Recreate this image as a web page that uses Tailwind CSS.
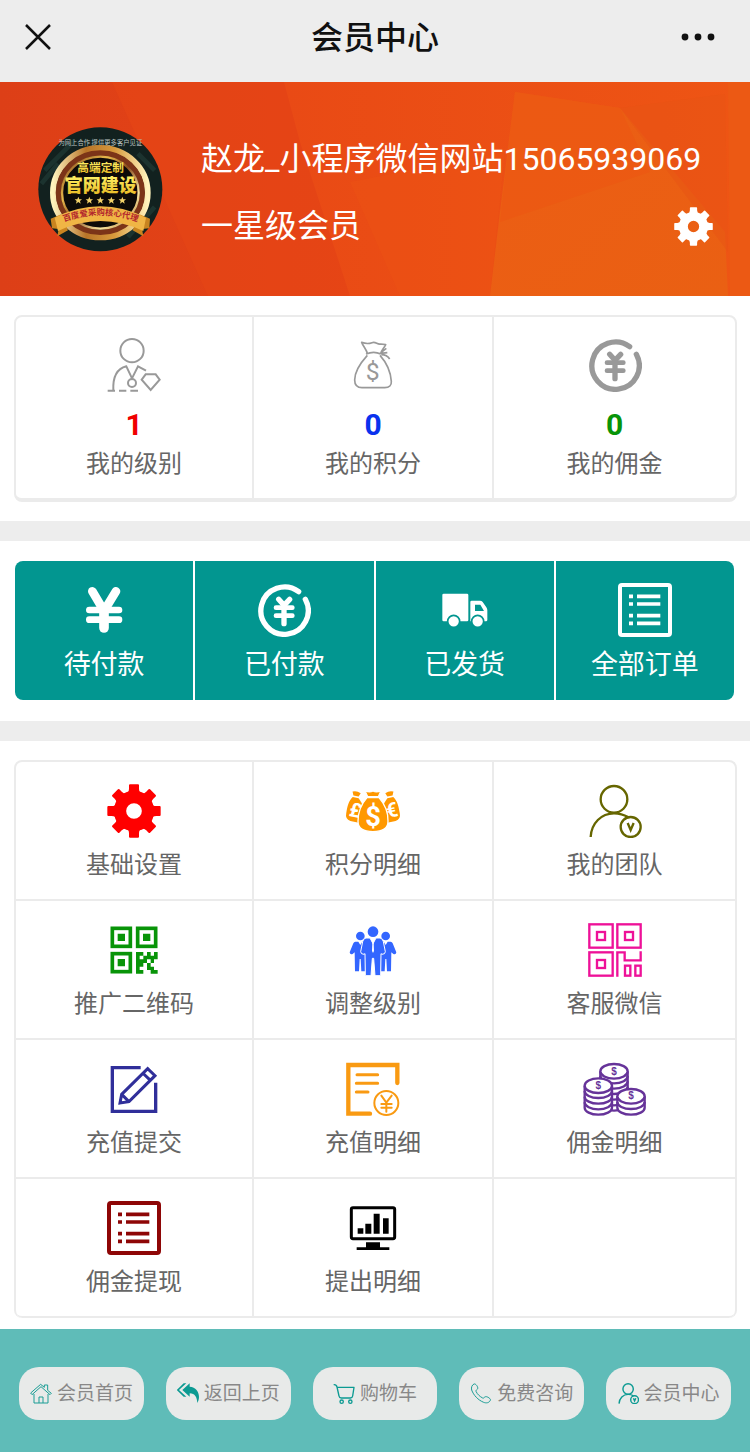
<!DOCTYPE html>
<html lang="zh-CN">
<head>
<meta charset="utf-8">
<meta name="viewport" content="width=device-width, initial-scale=1">
<title>会员中心</title>
<script src="https://cdn.jsdelivr.net/npm/@tailwindcss/browser@4"></script>
</head>
<body class="bg-white font-[Roboto,'Noto_Sans_CJK_SC',sans-serif] text-[#666]">

<!-- Shared icon shapes -->
<svg class="hidden" aria-hidden="true">
  <symbol id="gear" viewBox="0 0 162 162">
    <circle cx="81" cy="81" r="42" fill="none" stroke="currentColor" stroke-width="37"/>
    <g fill="currentColor">
      <path id="tooth" d="M56 30Q66 26 66 14V4Q66 1 69 1H93Q96 1 96 4V14Q96 26 106 30L100 45H62Z"/>
      <use href="#tooth" transform="rotate(45 81 81)"/><use href="#tooth" transform="rotate(90 81 81)"/>
      <use href="#tooth" transform="rotate(135 81 81)"/><use href="#tooth" transform="rotate(180 81 81)"/>
      <use href="#tooth" transform="rotate(225 81 81)"/><use href="#tooth" transform="rotate(270 81 81)"/>
      <use href="#tooth" transform="rotate(315 81 81)"/>
    </g>
  </symbol>
  <symbol id="yen-circle" viewBox="0 0 162 162">
    <g fill="none" stroke="currentColor" stroke-linecap="round" stroke-linejoin="round">
      <path stroke-width="16" d="M125 26A71 71 0 1 0 145 49"/>
      <path stroke-width="16" d="M65 49L81 67L98 49M81 67V122"/>
      <path stroke-width="14" d="M57 74H106M57 98H106"/>
    </g>
  </symbol>
  <symbol id="list" viewBox="0 0 162 162">
    <rect x="6" y="6" width="150" height="150" rx="6" fill="none" stroke="currentColor" stroke-width="12"/>
    <path stroke="currentColor" stroke-width="11" d="M33 40H45M57 40H127M33 63H45M57 63H127M33 98H45M57 98H127M33 121H45M57 121H127"/>
  </symbol>
  <symbol id="member" viewBox="0 0 162 162">
    <g fill="none" stroke="currentColor">
      <circle cx="78" cy="46" r="40"/>
      <path d="M8 159C10 118 40 88 78 88C96 88 108 92 120 99"/>
      <circle cx="128" cy="129" r="30"/>
      <path d="M119 117L128 138L137 117"/>
    </g>
  </symbol>
</svg>

<header class="flex h-[82px] items-start justify-between bg-[#ededed] px-6 text-[#111]">
  <button type="button" aria-label="关闭" class="mt-[23px] w-12">
    <svg class="h-7 w-7" viewBox="0 0 28 28" fill="none" stroke="currentColor" stroke-width="2.5"><path d="M2 2L26 26M26 2L2 26"/></svg>
  </button>
  <h1 class="mt-[14px] text-[32px] leading-[48px] font-medium">会员中心</h1>
  <button type="button" aria-label="更多" class="mt-[30px] flex w-12 justify-end pr-[10px]">
    <svg class="h-[14px] w-9" viewBox="0 0 36 14" fill="currentColor"><circle cx="5" cy="7" r="3.4"/><circle cx="18" cy="7" r="3.4"/><circle cx="31" cy="7" r="3.4"/></svg>
  </button>
</header>

<section class="relative flex h-[214px] items-start bg-[#e24216] pl-[38px] text-white">
  <!-- Faceted backdrop behind the profile -->
  <svg class="absolute inset-0 h-full w-full" viewBox="0 0 750 214" preserveAspectRatio="none" aria-hidden="true">
    <defs>
      <linearGradient id="b1" x1="0" x2="1" y1="0" y2="0"><stop offset="0" stop-color="#dd3f17"/><stop offset="1" stop-color="#e54416"/></linearGradient>
      <linearGradient id="b2" x1="0" x2="1" y1="0" y2="0"><stop offset="0" stop-color="#e94a15"/><stop offset="1" stop-color="#ee5514"/></linearGradient>
      <linearGradient id="b3" x1="0" x2="1" y1="0" y2="1"><stop offset="0" stop-color="#ec5d14"/><stop offset="1" stop-color="#ea6013"/></linearGradient>
    </defs>
    <path fill="url(#b1)" d="M0 0H360V214H0Z"/>
    <path fill="#e64616" opacity=".6" d="M112 0H300L355 214H208Z"/>
    <path fill="url(#b2)" d="M284 0H750V214H350L300 60Z"/>
    <path fill="#ee5815" opacity=".25" d="M350 100L505 70L490 214H400Z"/>
    <path fill="url(#b3)" d="M515 10L620 26L725 150L728 214H490L500 130Z"/>
    <path fill="#ec5713" opacity=".6" d="M515 10L620 26L650 90L500 140Z"/>
    <path fill="#e85313" opacity=".5" d="M620 26L725 12L728 170Z"/>
    <path fill="#ec5914" d="M728 0H750V214H730Z"/>
  </svg>

  <svg class="relative mt-[45px] h-[125px] w-[125px] shrink-0" viewBox="0 0 375 375" role="img" aria-label="头像">
    <defs>
      <linearGradient id="gold" x1="0" x2="1" y1="0" y2="1"><stop offset="0" stop-color="#7a3c14"/><stop offset=".3" stop-color="#e9b94c"/><stop offset=".5" stop-color="#8a4a1c"/><stop offset=".75" stop-color="#fbe6a0"/><stop offset="1" stop-color="#a8661f"/></linearGradient>
      <linearGradient id="gold2" x1="0" x2="1" y1="0" y2="0"><stop offset="0" stop-color="#fff3bd"/><stop offset=".35" stop-color="#b87428"/><stop offset=".65" stop-color="#d89a3c"/><stop offset="1" stop-color="#fff3bd"/></linearGradient>
      <linearGradient id="gold3" x1="0" x2="0" y1="0" y2="1"><stop offset="0" stop-color="#fff46a"/><stop offset="1" stop-color="#e8b820"/></linearGradient>
      <path id="arc" d="M62 291Q188 238 314 291"/>
      <path id="star" d="M0-11L3-3L11-3L5 2L7 10L0 5L-7 10L-5 2L-11-3L-3-3Z"/>
    </defs>
    <circle cx="187" cy="187" r="186" fill="#12211f"/>
    <path d="M20 130L110 40M10 170L60 110M270 330L350 240M300 80L350 130" stroke="#1c332f" stroke-width="14"/>
    <text x="187" y="53" text-anchor="middle" font-size="19" fill="#b9c2c0">为网上合作 提供更多客户见证</text>
    <ellipse cx="187" cy="197" rx="142" ry="134" fill="none" stroke="url(#gold2)" stroke-width="18"/>
    <ellipse cx="187" cy="197" rx="126" ry="119" fill="none" stroke="#7c3418" stroke-width="16"/>
    <ellipse cx="187" cy="197" rx="115" ry="108" fill="#0d0b08" stroke="url(#gold)" stroke-width="7"/>
    <text x="188" y="135" text-anchor="middle" font-size="35" font-weight="700" fill="url(#gold3)">高端定制</text>
    <text x="188" y="195" text-anchor="middle" font-size="54" font-weight="900" fill="url(#gold3)">官网建设</text>
    <g fill="#f3d36a"><use href="#star" x="121" y="220"/><use href="#star" x="154" y="220"/><use href="#star" x="187" y="220"/><use href="#star" x="220" y="220"/><use href="#star" x="253" y="220"/></g>
    <path fill="#c98420" d="M38 275L70 262L90 310L58 328L62 306L42 304ZM336 275L304 262L284 310L316 328L312 306L334 304Z"/>
    <path fill="#f0b545" d="M50 272Q187 204 324 272L316 312Q187 252 60 312Z"/>
    <text font-size="25" font-weight="700" fill="#b3272d" text-anchor="middle"><textPath href="#arc" startOffset="50%">百度爱采购核心代理</textPath></text>
  </svg>

  <div class="relative ml-[38px] mt-[53px] min-w-0 flex-1 pr-[37px]">
    <p class="text-[32px] leading-[48px] whitespace-nowrap">赵龙_小程序微信网站15065939069</p>
    <div class="mt-[19px] flex items-center justify-between">
      <p class="text-[32px] leading-[48px]">一星级会员</p>
      <a href="#settings" aria-label="设置"><svg class="h-[39px] w-[39px]"><use href="#gear"/></svg></a>
    </div>
  </div>
</section>

<nav aria-label="账户概况" class="mt-[19px] mr-[13px] mb-[19px] ml-[14px] grid grid-cols-[238fr_240fr_241fr] divide-x-2 divide-[#ebebeb] rounded-lg border-2 border-b-4 border-[#ebebeb] text-center text-2xl">
  <a href="#level" class="flex flex-col items-center pt-[21px] pb-4">
    <svg class="h-[54px] w-[54px] text-[#999]" viewBox="0 0 162 162" fill="none" stroke="currentColor" stroke-width="6">
      <circle cx="75" cy="38" r="35"/>
      <path d="M2 158H24M36 158H58M70 158H93M19 158C17 118 30 92 58 85L75 121L93 85L117 98"/>
      <circle cx="75" cy="135" r="12"/>
      <path d="M116 109H146L158 125L131 156L104 125Z"/>
    </svg>
    <strong class="mt-[17px] text-[30px] leading-8 font-bold text-[#f00000]">1</strong>
    <span class="mt-[5px] leading-9">我的级别</span>
  </a>
  <a href="#points" class="flex flex-col items-center pt-[21px] pb-4">
    <svg class="h-[54px] w-[54px] text-[#999]" viewBox="0 0 162 162" fill="none" stroke="currentColor" stroke-width="5" stroke-linejoin="round">
      <path d="M64 47C62 34 52 26 47 13C60 18 68 18 78 14C90 10 94 21 104 18L119 20C114 31 108 34 104 47M60 48C74 42 92 42 104 48M64 52C44 74 26 100 26 126C26 142 32 149 48 149H116C130 149 137 142 136 130C134 102 120 72 102 52M102 46L121 31M104 46L124 44M106 50C118 50 125 53 131 63"/>
      <text x="80" y="127" text-anchor="middle" font-size="74" fill="currentColor" stroke="none">$</text>
    </svg>
    <strong class="mt-[17px] text-[30px] leading-8 font-bold text-[#0a32ee]">0</strong>
    <span class="mt-[5px] leading-9">我的积分</span>
  </a>
  <a href="#commission" class="flex flex-col items-center pt-[21px] pb-4">
    <svg class="h-[54px] w-[54px] text-[#999]"><use href="#yen-circle"/></svg>
    <strong class="mt-[17px] text-[30px] leading-8 font-bold text-[#089408]">0</strong>
    <span class="mt-[5px] leading-9">我的佣金</span>
  </a>
</nav>

<div class="h-5 bg-[#ededed]"></div>

<nav aria-label="订单" class="mt-5 mr-4 mb-[21px] ml-[15px] grid grid-cols-4 gap-[2px] overflow-hidden rounded-lg text-center text-[27px] leading-9 text-white">
  <a href="#unpaid" class="flex flex-col items-center bg-[#029690] pt-[22px] pb-[17px]">
    <svg class="h-[54px] w-[54px]" viewBox="0 0 162 162" fill="none" stroke="currentColor" stroke-linecap="round" stroke-linejoin="round">
      <path stroke-width="26" d="M46 25L81 84L117 25"/><path stroke-width="29" d="M81 84V135"/><path stroke-width="20" d="M37 81H126M37 110H126"/>
    </svg>
    <span class="mt-[10px]">待付款</span>
  </a>
  <a href="#paid" class="flex flex-col items-center bg-[#029690] pt-[22px] pb-[17px]">
    <svg class="h-[54px] w-[54px]"><use href="#yen-circle"/></svg>
    <span class="mt-[10px]">已付款</span>
  </a>
  <a href="#shipped" class="flex flex-col items-center bg-[#029690] pt-[22px] pb-[17px]">
    <svg class="h-[54px] w-[54px]" viewBox="0 0 162 162" fill="currentColor">
      <rect x="13" y="32" width="78" height="83" rx="4"/>
      <path fill-rule="evenodd" d="M97 57Q97 53 101 53H126Q131 53 134 57L145 73Q148 77 148 82V111Q148 115 144 115H97ZM111 65V84H138L127 65Z"/>
      <g stroke="#029690" stroke-width="5"><circle cx="47" cy="115" r="18"/><circle cx="119" cy="115" r="18"/></g>
    </svg>
    <span class="mt-[10px]">已发货</span>
  </a>
  <a href="#orders" class="flex flex-col items-center bg-[#029690] pt-[22px] pb-[17px]">
    <svg class="h-[54px] w-[54px]"><use href="#list"/></svg>
    <span class="mt-[10px]">全部订单</span>
  </a>
</nav>

<div class="h-5 bg-[#ededed]"></div>

<nav aria-label="会员功能" class="mt-[19px] mr-[13px] mb-[11px] ml-[14px] overflow-hidden rounded-lg border-2 border-b-0 border-[#ebebeb] text-center text-2xl leading-9">
  <div class="grid grid-cols-[238fr_240fr_241fr] divide-x-2 divide-[#ebebeb] border-b-2 border-[#ebebeb]">
    <a href="#basic" class="flex flex-col items-center pt-[22px] pb-4">
      <svg class="h-[54px] w-[54px] text-[#ff0000]"><use href="#gear"/></svg>
      <span class="mt-[9px]">基础设置</span>
    </a>
    <a href="#points-log" class="flex flex-col items-center pt-[22px] pb-4">
      <svg class="h-[54px] w-[54px] overflow-visible text-[#ff9800]" viewBox="0 0 162 162" fill="currentColor" font-weight="700" text-anchor="middle">
        <g transform="rotate(12 30 80)">
          <path d="M8 26Q20 20 33 26L29 37H13ZM12 42H30C46 56 56 72 56 94Q55 113 42 114H20Q3 112 3 94C2 72 2 56 12 42Z"/>
          <text x="28" y="100" font-size="60" fill="#fff">£</text>
        </g>
        <g transform="rotate(-12 132 80)">
          <path d="M129 26Q142 20 154 26L149 37H133ZM132 42H150C160 56 160 72 159 94Q159 112 142 114H120Q107 113 106 94C106 72 116 56 132 42Z"/>
          <text x="138" y="100" font-size="60" fill="#fff">€</text>
        </g>
        <path stroke="#fff" stroke-width="4" d="M57 20Q70 27 81 21Q92 27 105 20L97 38H65ZM63 41H99C114 58 127 82 126 112Q126 143 81 143Q36 143 36 112C36 82 48 58 63 41Z"/>
        <text x="81" y="126" font-size="82" fill="#fff">$</text>
      </svg>
      <span class="mt-[9px]">积分明细</span>
    </a>
    <a href="#team" class="flex flex-col items-center pt-[22px] pb-4">
      <svg class="h-[54px] w-[54px] text-[#666600]" stroke-width="7"><use href="#member"/></svg>
      <span class="mt-[9px]">我的团队</span>
    </a>
  </div>
  <div class="grid grid-cols-[238fr_240fr_241fr] divide-x-2 divide-[#ebebeb] border-b-2 border-[#ebebeb]">
    <a href="#qrcode" class="flex flex-col items-center pt-[22px] pb-4">
      <svg class="h-[54px] w-[54px] text-[#089408]" viewBox="0 0 162 162" fill="currentColor">
        <g fill="none" stroke="currentColor" stroke-width="11"><rect x="16" y="16" width="54" height="54"/><rect x="92" y="16" width="54" height="54"/><rect x="16" y="92" width="54" height="54"/></g>
        <path d="M32 32H54V54H32ZM108 32H130V54H108ZM32 108H54V130H32Z"/>
        <path d="M87 87H109V98H98V109H109V98H120V87H131V98H141V87H152V109H141V120H131V109H120V120H109V131H98V141H109V152H87ZM120 120H131V131H141V141H152V152H131V141H120Z"/>
      </svg>
      <span class="mt-[9px]">推广二维码</span>
    </a>
    <a href="#adjust" class="flex flex-col items-center pt-[22px] pb-4">
      <svg class="h-[54px] w-[54px] text-[#3366ff]" viewBox="0 0 162 162" fill="currentColor">
        <g id="side-person">
          <circle cx="43" cy="39" r="13"/>
          <path d="M28 56H37L43 66L49 56H60Q66 56 66 64L66 94L58 106L57 145H46L44 108H41L39 145H27L26 88L20 93Q12 96 11 88L22 61Q24 57 28 56Z"/>
        </g>
        <use href="#side-person" transform="translate(162 0) scale(-1 1)"/>
        <path stroke="#fff" stroke-width="3" d="M60 45H72L81 62L90 45H102Q110 46 112 56L118 86Q118 94 108 94L105 92L104 158H87L83 106H79L75 158H58L57 92L54 94Q44 94 44 86L50 56Q52 46 60 45Z"/>
        <circle cx="81" cy="26" r="16"/>
        <path fill="#fff" d="M79 58H83L84 84L81 90L78 84Z"/>
      </svg>
      <span class="mt-[9px]">调整级别</span>
    </a>
    <a href="#wechat" class="flex flex-col items-center pt-[22px] pb-4">
      <svg class="h-[54px] w-[54px] text-[#ee1198]" viewBox="0 0 162 162" fill="none" stroke="currentColor" stroke-width="7">
        <rect x="4" y="4" width="70" height="70"/><rect x="88" y="4" width="70" height="70"/><rect x="4" y="88" width="70" height="70"/>
        <rect x="27" y="27" width="24" height="24"/><rect x="111" y="27" width="24" height="24"/><rect x="27" y="111" width="24" height="24"/>
        <path d="M88 161V88H110V112H158V85"/>
        <rect x="111" y="128" width="16" height="30"/><rect x="142" y="128" width="16" height="30"/>
      </svg>
      <span class="mt-[9px]">客服微信</span>
    </a>
  </div>
  <div class="grid grid-cols-[238fr_240fr_241fr] divide-x-2 divide-[#ebebeb] border-b-2 border-[#ebebeb]">
    <a href="#recharge" class="flex flex-col items-center pt-[22px] pb-4">
      <svg class="h-[54px] w-[54px] text-[#302f9a]" viewBox="0 0 162 162" fill="none" stroke="currentColor" stroke-width="9">
        <path stroke-width="10" d="M101 17H16V148H146V62"/>
        <path d="M39 123L44 97L122 20L144 41L66 119ZM107 33L131 56M44 97L66 119"/>
        <path fill="currentColor" stroke="none" d="M36 127L38 112L50 124Z"/>
      </svg>
      <span class="mt-[9px]">充值提交</span>
    </a>
    <a href="#recharge-log" class="flex flex-col items-center pt-[22px] pb-4">
      <svg class="h-[54px] w-[54px] text-[#f99a12]" viewBox="0 0 162 162" fill="none" stroke="currentColor" stroke-linecap="round">
        <path stroke-width="13" d="M154 63V9H7V155H72"/>
        <path stroke-width="9" d="M33 38H95M31 64H95M31 90H66"/>
        <circle cx="121" cy="123" r="36" stroke-width="6"/>
        <path stroke-width="6" d="M106 101L121 122L137 101M121 122V149M106 126H137M106 137H137"/>
      </svg>
      <span class="mt-[9px]">充值明细</span>
    </a>
    <a href="#commission-log" class="flex flex-col items-center pt-[22px] pb-4">
      <svg class="h-[54px] w-16 text-[#663399]" viewBox="0 0 192 162" fill="#fff" stroke="currentColor" stroke-width="7">
        <path d="M52 28V124A41 22 0 0 0 134 124V28"/>
        <path fill="none" d="M52 42A41 22 0 0 0 134 42M52 58A41 22 0 0 0 134 58M52 74A41 22 0 0 0 134 74M52 91A41 22 0 0 0 134 91M52 108A41 22 0 0 0 134 108"/>
        <ellipse cx="93" cy="28" rx="41" ry="22"/>
        <path d="M5 71V137A41 21 0 0 0 87 137V71"/>
        <path fill="none" d="M5 87A41 21 0 0 0 87 87M5 104A41 21 0 0 0 87 104M5 121A41 21 0 0 0 87 121"/>
        <ellipse cx="46" cy="71" rx="41" ry="22"/>
        <path d="M103 103V137A41 21 0 0 0 185 137V103"/>
        <path fill="none" d="M103 120A41 21 0 0 0 185 120"/>
        <ellipse cx="144" cy="103" rx="41" ry="22"/>
        <g fill="currentColor" stroke="none" font-family="Liberation Sans" font-size="30" font-weight="700" text-anchor="middle"><text x="93" y="38">$</text><text x="46" y="80">$</text><text x="144" y="111">$</text></g>
      </svg>
      <span class="mt-[9px]">佣金明细</span>
    </a>
  </div>
  <div class="grid grid-cols-[238fr_240fr_241fr] divide-x-2 divide-[#ebebeb] rounded-b-md border-b-2 border-[#ebebeb]">
    <a href="#withdraw" class="flex flex-col items-center pt-[22px] pb-4">
      <svg class="h-[54px] w-[54px] text-[#8e0606]"><use href="#list"/></svg>
      <span class="mt-[9px]">佣金提现</span>
    </a>
    <a href="#withdraw-log" class="flex flex-col items-center pt-[22px] pb-4">
      <svg class="h-[54px] w-[54px] text-black" viewBox="0 0 162 162" fill="currentColor">
        <rect x="16" y="20" width="130" height="93" rx="5" fill="none" stroke="currentColor" stroke-width="9"/>
        <path d="M35 82H52V98H35ZM58 68H76V98H58ZM83 38H101V98H83ZM111 52H128V98H111ZM60 124H102V139H130V147H32V139H60Z"/>
      </svg>
      <span class="mt-[9px]">提出明细</span>
    </a>
    <div></div>
  </div>
</nav>

<footer class="bg-[#5fbcb8] px-[19px] pt-[38px] pb-8">
  <nav aria-label="底部导航" class="grid grid-cols-5 gap-[22px] text-[19px] leading-7 whitespace-nowrap text-[#888]">
    <a href="#home" class="flex h-[53px] items-center justify-center gap-[5px] rounded-[20px] bg-[#e8eae9]">
      <svg class="h-[22px] w-[22px] shrink-0 text-[#1a9d95]" viewBox="0 0 66 66" fill="none" stroke="currentColor" stroke-width="3" stroke-linejoin="round"><path d="M2 30L32 4L43 13V6H53V22L64 31L60 35L33 11L6 35ZM12 33V60H54V33M27 60V42H39V60"/></svg>
      <span>会员首页</span>
    </a>
    <a href="#back" class="flex h-[53px] items-center justify-center gap-[5px] rounded-[20px] bg-[#e8eae9]">
      <svg class="h-[22px] w-[22px] shrink-0 text-[#0b9a92]" viewBox="0 0 66 66" fill="currentColor"><path d="M16 21L38 1V11C56 12 66 26 66 42C66 50 63 56 61 60C60 42 54 32 38 31V41ZM20 1H28L6 21L28 41H20L-1 21Z"/></svg>
      <span>返回上页</span>
    </a>
    <a href="#cart" class="flex h-[53px] items-center justify-center gap-[5px] rounded-[20px] bg-[#e8eae9]">
      <svg class="h-[22px] w-[22px] shrink-0 text-[#0b9a92]" viewBox="0 0 66 66" fill="none" stroke="currentColor" stroke-width="4" stroke-linejoin="round"><path d="M2 5Q10 4 12 12L18 39Q19 45 25 45H52Q58 45 59 39L63 13H13"/><circle cx="26" cy="56" r="5"/><circle cx="52" cy="56" r="5"/></svg>
      <span>购物车</span>
    </a>
    <a href="tel:" class="flex h-[53px] items-center justify-center gap-[5px] rounded-[20px] bg-[#e8eae9]">
      <svg class="h-[22px] w-[22px] shrink-0 text-[#1a9d95]" viewBox="0 0 66 66" fill="none" stroke="currentColor" stroke-width="3" stroke-linejoin="round"><path d="M12 3C17 1 25 12 23 17C22 20 17 21 18 25C22 34 30 41 38 45C42 47 43 41 47 41C52 40 64 48 61 52C57 60 49 61 41 58C24 51 11 37 5 21C3 13 6 6 12 3Z"/></svg>
      <span>免费咨询</span>
    </a>
    <a href="#member-center" aria-current="page" class="flex h-[53px] items-center justify-center gap-[5px] rounded-[20px] bg-[#e8eae9]">
      <svg class="h-[21px] w-[21px] shrink-0 text-[#0b9a92]" stroke-width="11"><use href="#member"/></svg>
      <span>会员中心</span>
    </a>
  </nav>
</footer>

</body>
</html>
